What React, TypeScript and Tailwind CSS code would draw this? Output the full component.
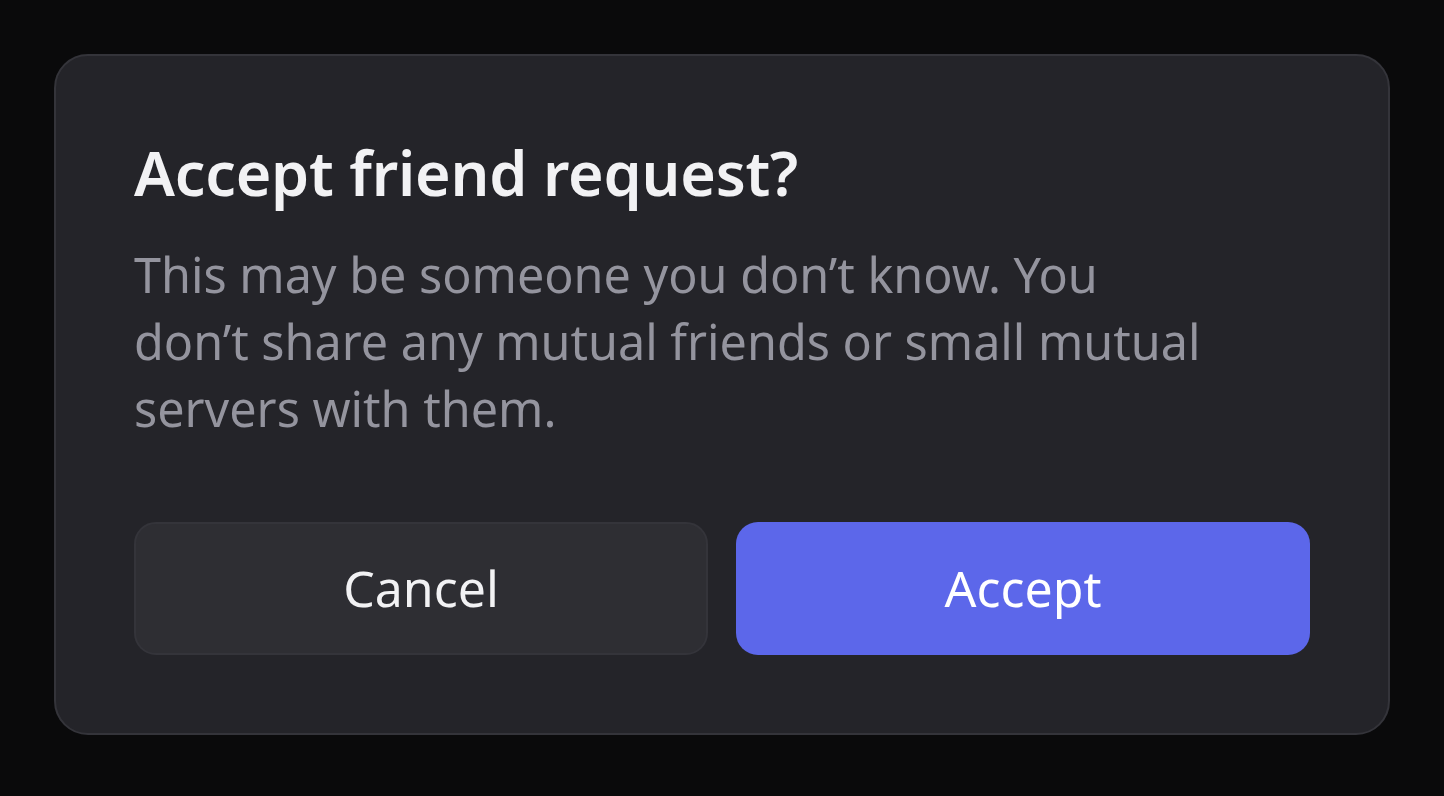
import React from "react";

export default function App() {
  return (
    <div className="min-h-screen w-full bg-[#0a0a0b] p-[54px] font-['Noto_Sans',sans-serif]">
      {/* Dialog card */}
      <div className="w-[1336px] rounded-[34px] border-2 border-[#34343a] bg-[#242429] p-[78px]">
        <h1 className="text-[61px] leading-[78px] font-semibold text-[#f2f2f4] tracking-[-0.2px]">
          Accept friend request?
        </h1>
        <p className="mt-[29px] text-[48.5px] leading-[67px] text-[#94949e]">
          This may be someone you don’t know. You
          <br />
          don’t share any mutual friends or small mutual
          <br />
          servers with them.
        </p>

        {/* Actions */}
        <div className="mt-[80px] grid grid-cols-2 gap-[28px]">
          <button className="h-[133px] rounded-[22px] border-2 border-[#34343a] bg-[#2e2e33] text-[50px] font-normal text-[#f2f2f4]">
            Cancel
          </button>
          <button className="h-[133px] rounded-[22px] bg-[#5c67ea] text-[50px] font-normal text-white">
            Accept
          </button>
        </div>
      </div>
    </div>
  );
}
